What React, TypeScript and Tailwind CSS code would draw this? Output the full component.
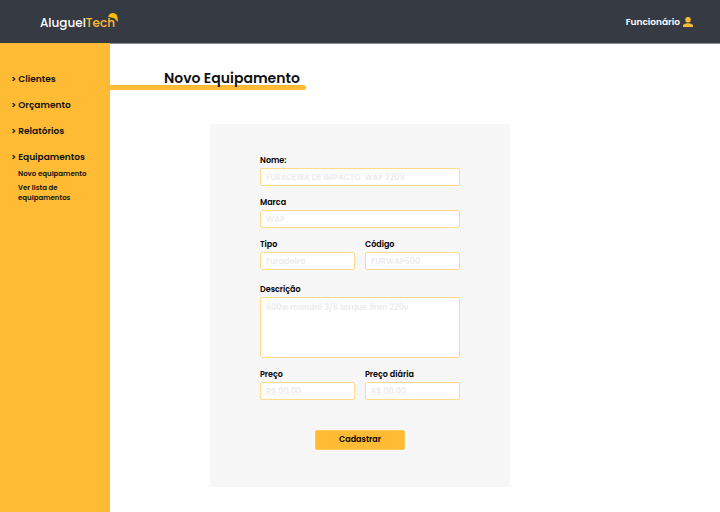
import React from "react";

const sections = ["Clientes", "Orçamento", "Relatórios", "Equipamentos"];

const inputStyle =
  "block w-full rounded-xs border border-[#ffd98c] bg-white px-[5px] text-[8px] font-semibold text-black placeholder:text-[#ececec] placeholder:opacity-100 outline-none focus:border-[#ffbb33]";

function Field(props: {
  id: string;
  label: string;
  placeholder: string;
  multiline?: boolean;
}) {
  const { id, label, placeholder, multiline } = props;
  return (
    <div className="min-w-0 flex-1">
      <label htmlFor={id} className="block text-[8px] leading-[14px] font-semibold">
        {label}
      </label>
      {multiline ? (
        <textarea
          id={id}
          placeholder={placeholder}
          className={`${inputStyle} h-[61px] resize-none py-1 leading-3`}
        />
      ) : (
        <input
          id={id}
          type="text"
          placeholder={placeholder}
          className={`${inputStyle} h-[18px] pt-[2px]`}
        />
      )}
    </div>
  );
}

function Helmet() {
  return (
    <svg viewBox="0 0 10 9" className="absolute -top-[2px] -right-[3px] h-[9px] w-[10px]" aria-hidden="true">
      <path
        d="M.3 3.300C1.200 1.200 3.100 0 5.200.1c2.500.1 4.300 2.100 4.200 4.500l.5 3.200c.1.600-.5.900-.9.500L6.400 5.300.8 4.100C.4 4 .2 3.600.3 3.300Z"
        fill="#fcbf05"
      />
    </svg>
  );
}

export default function App() {
  return (
    <div className="flex min-h-screen flex-col bg-white font-['Poppins','Inter',sans-serif] text-[#111111]">
      <header className="flex h-11 items-center justify-between border-b border-[#8d8b93] bg-[#363a43] pr-[27px] pl-10 text-white">
        <a href="#" className="relative mt-[3px] text-[12px] leading-4 font-medium">
          Aluguel<span className="text-[#ffbb33]">Tech</span>
          <Helmet />
        </a>
        <a href="#" className="flex items-center gap-[3px] text-[9px] leading-3 font-semibold">
          Funcionário
          <svg viewBox="0 0 10 10" className="h-[10px] w-[10px]" fill="#ffbb33" aria-hidden="true">
            <rect x="2.300" y="0" width="5.400" height="5.600" rx="2.500" />
            <path d="M0 10V8.800C0 7 2.200 6.200 5 6.200s5 .8 5 2.600V10Z" />
          </svg>
        </a>
      </header>
      <div className="flex flex-1">
        <nav className="-mt-px w-[110px] shrink-0 bg-[#ffbb33] px-[11px] pt-7">
          <ul className="flex flex-col gap-[10px] text-[9px] leading-4 font-semibold">
            {sections.map((name) => (
              <li key={name}>
                <a href="#">&gt; {name}</a>
              </li>
            ))}
          </ul>
          <ul className="mt-1 flex flex-col gap-1 pl-[7px] text-[7px] leading-[10px] font-semibold">
            <li>
              <a href="#">Novo equipamento</a>
            </li>
            <li>
              <a href="#">
                Ver lista de
                <br />
                equipamentos
              </a>
            </li>
          </ul>
        </nav>
        <main className="flex-1 pt-[22px] pb-6">
          <div className="relative isolate w-[196px] pl-[54px]">
            <span className="absolute bottom-0 left-0 -z-10 h-[5px] w-full rounded-r-full bg-[#ffbb33]" />
            <h1 className="text-[14px] leading-6 font-semibold whitespace-nowrap">Novo Equipamento</h1>
          </div>
          <form className="mt-[34px] ml-[100px] flex w-[300px] flex-col gap-[10px] rounded-xs bg-[#f7f7f7] px-[50px] pt-[30px] pb-[37px] text-black">
            <Field id="nome" label="Nome:" placeholder="FURADEIRA DE IMPACTO  WAP 220V" />
            <Field id="marca" label="Marca" placeholder="WAP" />
            <div className="flex gap-[10px]">
              <Field id="tipo" label="Tipo" placeholder="Furadeira" />
              <Field id="codigo" label="Código" placeholder="FURWAP600" />
            </div>
            <div className="pt-[3px]">
              <Field id="descricao" label="Descrição" placeholder="600w mandril 3/8 torque 9nm 220v" multiline />
            </div>
            <div className="flex gap-[10px]">
              <Field id="preco" label="Preço" placeholder="R$ 00,00" />
              <Field id="preco-diaria" label="Preço diária" placeholder="R$ 00,00" />
            </div>
            <button
              type="button"
              className="mt-5 h-5 w-[90px] self-center rounded-xs border border-[#ffc95c] bg-[#ffbb33] text-[8px] leading-3 font-semibold"
            >
              Cadastrar
            </button>
          </form>
        </main>
      </div>
    </div>
  );
}
